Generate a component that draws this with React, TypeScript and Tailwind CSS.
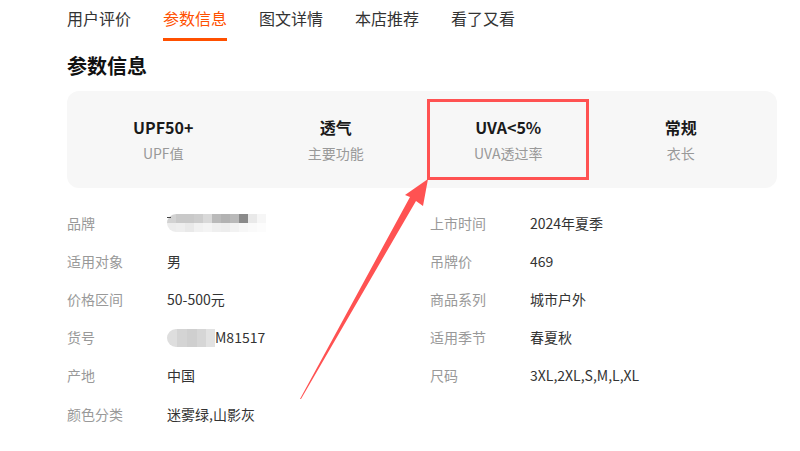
import React from 'react';

const tabs = ['用户评价', '参数信息', '图文详情', '本店推荐', '看了又看'];

const highlights = [
  { value: 'UPF50+', label: 'UPF值' },
  { value: '透气', label: '主要功能' },
  { value: 'UVA<5%', label: 'UVA透过率', marked: true },
  { value: '常规', label: '衣长' },
];

const brandTop = [
  'bg-[#d2d2d2] rounded-tl-[9px]',
  'bg-[#c9c9c9]',
  'bg-[#c9c9c9]',
  'bg-[#cdcdcd]',
  'bg-[#d9d9d9]',
  'bg-[#bababa]',
  'bg-[#b2b2b2]',
  'bg-[#b9b9b9]',
  'bg-[#8a8a8a]',
  'bg-[#e9e9e9]',
  'bg-[#f6f6f6]',
];
const brandBottom = [
  'bg-[#ececec] rounded-bl-[9px]',
  'bg-[#eeeeee]',
  'bg-[#e9e9e9]',
  'bg-[#f1f1f1]',
  'bg-[#f4f4f4]',
  'bg-[#efefef]',
  'bg-[#ededed]',
  'bg-[#f2f2f2]',
  'bg-[#f7f7f7]',
  'bg-[#fafafa]',
  'bg-[#fcfcfc]',
];

const BrandBlur: React.FC = () => (
  <div className="relative flex flex-col">
    <div className="flex">
      {brandTop.map((c, i) => (
        <div key={i} className={`h-[9px] w-[9px] ${c}`} />
      ))}
    </div>
    <div className="flex">
      {brandBottom.map((c, i) => (
        <div key={i} className={`h-[9px] w-[9px] ${c}`} />
      ))}
    </div>
    <div className="absolute left-0 top-[3px] h-[1px] w-[4px] bg-[#444]" />
  </div>
);

const CodeBlur: React.FC = () => (
  <div className="flex h-[18px] overflow-hidden rounded-l-[9px]">
    <div className="w-[10px] bg-[#dedede]" />
    <div className="w-[10px] bg-[#d4d4d4]" />
    <div className="w-[10px] bg-[#cfcfcf]" />
    <div className="w-[9px] bg-[#d6d6d6]" />
    <div className="w-[9px] bg-[#e2e2e2]" />
  </div>
);

const leftRows: { label: string; value: React.ReactNode }[] = [
  { label: '品牌', value: <BrandBlur /> },
  { label: '适用对象', value: '男' },
  { label: '价格区间', value: '50-500元' },
  {
    label: '货号',
    value: (
      <span className="flex items-center">
        <CodeBlur />
        <span>M81517</span>
      </span>
    ),
  },
  { label: '产地', value: '中国' },
  { label: '颜色分类', value: '迷雾绿,山影灰' },
];

const rightRows = [
  { label: '上市时间', value: '2024年夏季' },
  { label: '吊牌价', value: '469' },
  { label: '商品系列', value: '城市户外' },
  { label: '适用季节', value: '春夏秋' },
  { label: '尺码', value: '3XL,2XL,S,M,L,XL' },
];

const Row: React.FC<{ label: string; value: React.ReactNode }> = ({ label, value }) => (
  <div className="flex h-[38.2px] items-center text-[14px]">
    <div className="w-[100px] shrink-0 text-[#999999]">{label}</div>
    <div className="text-[#333333]">{value}</div>
  </div>
);

const App: React.FC = () => (
  <div
    className="relative h-[451px] w-[800px] overflow-hidden bg-white pl-[67px] pr-[23px]"
    style={{ fontFamily: '"Noto Sans CJK SC", "Noto Sans", sans-serif' }}
  >
    <div className="flex gap-8">
      {tabs.map((t, i) => (
        <div key={t} className="flex flex-col">
          <div
            className={`pt-[6px] text-[16px] leading-6 ${
              i === 1 ? 'text-[#ff5000]' : 'text-[#333333]'
            }`}
          >
            {t}
          </div>
          <div className={`mt-[8px] h-[3px] ${i === 1 ? 'bg-[#ff5000]' : 'bg-transparent'}`} />
        </div>
      ))}
    </div>

    <h2 className="mt-[11px] text-[20px] font-bold leading-7 text-[#111111]">参数信息</h2>

    <div className="mt-[11px] grid h-[97px] grid-cols-4 rounded-[12px] bg-[#f7f7f7] px-[10px] py-[8px]">
      {highlights.map((h) => (
        <div key={h.label} className="flex justify-center">
          <div
            className={`flex h-[81px] w-[162px] flex-col items-center justify-center border-[3px] ${
              h.marked ? 'border-[#ff5252]' : 'border-transparent'
            }`}
          >
            <div className="text-[16px] font-bold leading-[22px] text-[#1a1a1a]">{h.value}</div>
            <div className="mt-[5px] text-[14px] leading-[20px] text-[#999999]">{h.label}</div>
          </div>
        </div>
      ))}
    </div>

    <div className="mt-[16px] grid grid-cols-[363px_1fr]">
      <div className="flex flex-col">
        {leftRows.map((r) => (
          <Row key={r.label} label={r.label} value={r.value} />
        ))}
      </div>
      <div className="flex flex-col">
        {rightRows.map((r) => (
          <Row key={r.label} label={r.label} value={r.value} />
        ))}
      </div>
    </div>

    {/* annotation arrow */}
    <svg className="pointer-events-none absolute left-0 top-0" width="800" height="451">
      <polygon
        points="300,399 410,197 405,195 428,179 423,206 416,201 301,399"
        fill="#ff5252"
      />
    </svg>
  </div>
);

export default App;
